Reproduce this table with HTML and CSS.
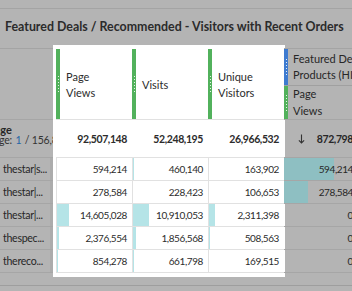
FILE: index.html
```html
<!DOCTYPE html>
<html lang="en">
<head>
<meta charset="utf-8">
<title>Freeform table</title>
<link rel="stylesheet" href="styles.css">
</head>
<body>
<div class="page">
  <div class="topbar"></div>
  <div class="title">Featured Deals / Recommended - Visitors with Recent Orders</div>
  <div class="table">
    <div class="dimcol">
      <div class="dh"></div>
      <div class="dt"><div class="dt-in"><div class="dname">Page</div><div class="dpage">Page: <span class="pnum">1</span> / 156,826</div></div></div>
      <div class="dr">thestar|s...</div>
      <div class="dr">thestar|...</div>
      <div class="dr">thestar|...</div>
      <div class="dr">thespec...</div>
      <div class="dr">thereco...</div>
    </div>
    <div class="spot">
      <div class="hcell"><span class="bar green"></span><span class="hlabel">Page Views</span></div>
      <div class="hcell"><span class="bar green"></span><span class="hlabel">Visits</span></div>
      <div class="hcell"><span class="bar green"></span><span class="hlabel">Unique Visitors</span></div>
      <div class="tcell">92,507,148</div>
      <div class="tcell">52,248,195</div>
      <div class="tcell">26,966,532</div>
      <div class="cell" style="--w:0.64%">594,214</div>
      <div class="cell" style="--w:0.88%">460,140</div>
      <div class="cell" style="--w:0.61%">163,902</div>
      <div class="cell" style="--w:0.30%">278,584</div>
      <div class="cell" style="--w:0.44%">228,423</div>
      <div class="cell" style="--w:0.40%">106,653</div>
      <div class="cell" style="--w:15.79%">14,605,028</div>
      <div class="cell" style="--w:20.88%">10,910,053</div>
      <div class="cell" style="--w:8.57%">2,311,398</div>
      <div class="cell" style="--w:2.57%">2,376,554</div>
      <div class="cell" style="--w:3.55%">1,856,568</div>
      <div class="cell" style="--w:1.89%">508,563</div>
      <div class="cell" style="--w:0.92%">854,278</div>
      <div class="cell" style="--w:1.27%">661,798</div>
      <div class="cell" style="--w:0.63%">169,515</div>
    </div>
    <div class="extcol">
      <div class="xseg"><span class="bar blue"></span><span class="xlabel">Featured Deals<br>Products (HIT)</span></div>
      <div class="xmet"><span class="bar green"></span><span class="xlabel">Page<br>Views</span></div>
      <div class="xtot"><svg class="sort" width="7" height="10" viewBox="0 0 7 10"><path d="M3.5 0.5V9M0.9 6.3L3.5 9L6.1 6.3" fill="none" stroke="#333" stroke-width="1.1"/></svg><span>872,798</span></div>
      <div class="xrow" style="--w:68.08%">594,214</div>
      <div class="xrow" style="--w:31.92%">278,584</div>
      <div class="xrow">0</div>
      <div class="xrow">0</div>
      <div class="xrow">0</div>
    </div>
  </div>
  <div class="foot"></div>
</div>
</body>
</html>
```

FILE: styles.css
```css
* { box-sizing: border-box; margin: 0; padding: 0; }
html, body { width: 352px; height: 291px; overflow: hidden; }
body { background: #b4b4b4; font-family: "Lato", "Liberation Sans", sans-serif; color: #272727; }
.page { width: 352px; height: 291px; overflow: hidden; }
.topbar { height: 9px; border-bottom: 1px solid #a4a4a4; }
.title { height: 39px; padding: 11px 0 0 5px; font-size: 12.4px; font-weight: 700; line-height: 14px; white-space: nowrap; color: #2b2b2b; }
.table { display: flex; align-items: flex-start; }

.dimcol { flex: none; width: 53px; overflow: hidden; }
.dh { height: 72px; border-top: 1px solid #a4a4a4; border-bottom: 1px solid #a6a6a6; }
.dt { height: 38px; border-bottom: 1px solid #a6a6a6; padding-top: 3.5px; line-height: 11px; white-space: nowrap; }
.dt-in { margin-left: -12px; }
.dname { font-size: 11px; font-weight: 700; }
.dpage { color: #333; font-size: 10.5px; letter-spacing: -0.2px; }
.pnum { color: #2465a6; margin: 0 1px; }
.dr { height: 23px; border-bottom: 1px solid #a6a6a6; padding-left: 3px; font-size: 10.6px; letter-spacing: -0.3px; line-height: 22px; white-space: nowrap; box-shadow: inset -3px 0 0 #acacac; }

.spot { flex: none; width: 232px; margin: -3px 0 -4px; padding: 3px 1px 4px 3px; background: #fff; display: grid; grid-template-columns: repeat(3, 76px); grid-template-rows: 72px 38px repeat(5, 23px); color: #2c2c2c; }
.hcell { display: flex; padding-top: 1px; border-bottom: 1px solid #e1e1e1; }
.bar { flex: none; width: 4px; display: flex; align-items: center; }
.bar::before { content: ""; width: 1px; height: 16px; margin-left: 2px; background: repeating-linear-gradient(to bottom, rgba(255,255,255,.85) 0 1px, transparent 1px 3px); }
.green { background: #52b15c; }
.blue { background: #3e7bd0; }
.hlabel { align-self: center; margin: 2px 0 0 6px; width: min-content; font-size: 11px; line-height: 16.5px; }
.tcell { display: flex; align-items: center; justify-content: flex-end; padding-right: 5px; border-bottom: 1px solid #e1e1e1; font-size: 10.5px; font-weight: 700; letter-spacing: -0.4px; }
.cell { display: flex; align-items: center; justify-content: flex-end; padding-right: 5px; border-left: 1px solid #e1e1e1; border-bottom: 1px solid #e1e1e1; font-size: 10px; letter-spacing: -0.4px; background: linear-gradient(to right, #b5e4e7 var(--w), transparent var(--w)); }

.extcol { flex: none; width: 74px; margin-left: -1px; }
.xseg { display: flex; height: 38px; border-top: 1px solid #a4a4a4; border-bottom: 1px solid #a0a0a0; }
.xmet { display: flex; height: 34px; border-bottom: 1px solid #a6a6a6; }
.xlabel { align-self: center; margin-left: 5px; font-size: 11px; line-height: 16.5px; white-space: nowrap; }
.xtot { display: flex; align-items: center; justify-content: flex-end; gap: 12px; height: 38px; padding-right: 5px; border-bottom: 1px solid #a6a6a6; font-size: 10.5px; font-weight: 700; letter-spacing: -0.4px; }
.sort { flex: none; }
.xrow { display: flex; align-items: center; justify-content: flex-end; height: 23px; padding-right: 5px; border-bottom: 1px solid #a6a6a6; font-size: 10px; letter-spacing: -0.4px; background: linear-gradient(to right, #8ebfc2 var(--w, 0%), transparent var(--w, 0%)); }
.foot { height: 13px; border-bottom: 1px solid #9e9e9e; }
```
